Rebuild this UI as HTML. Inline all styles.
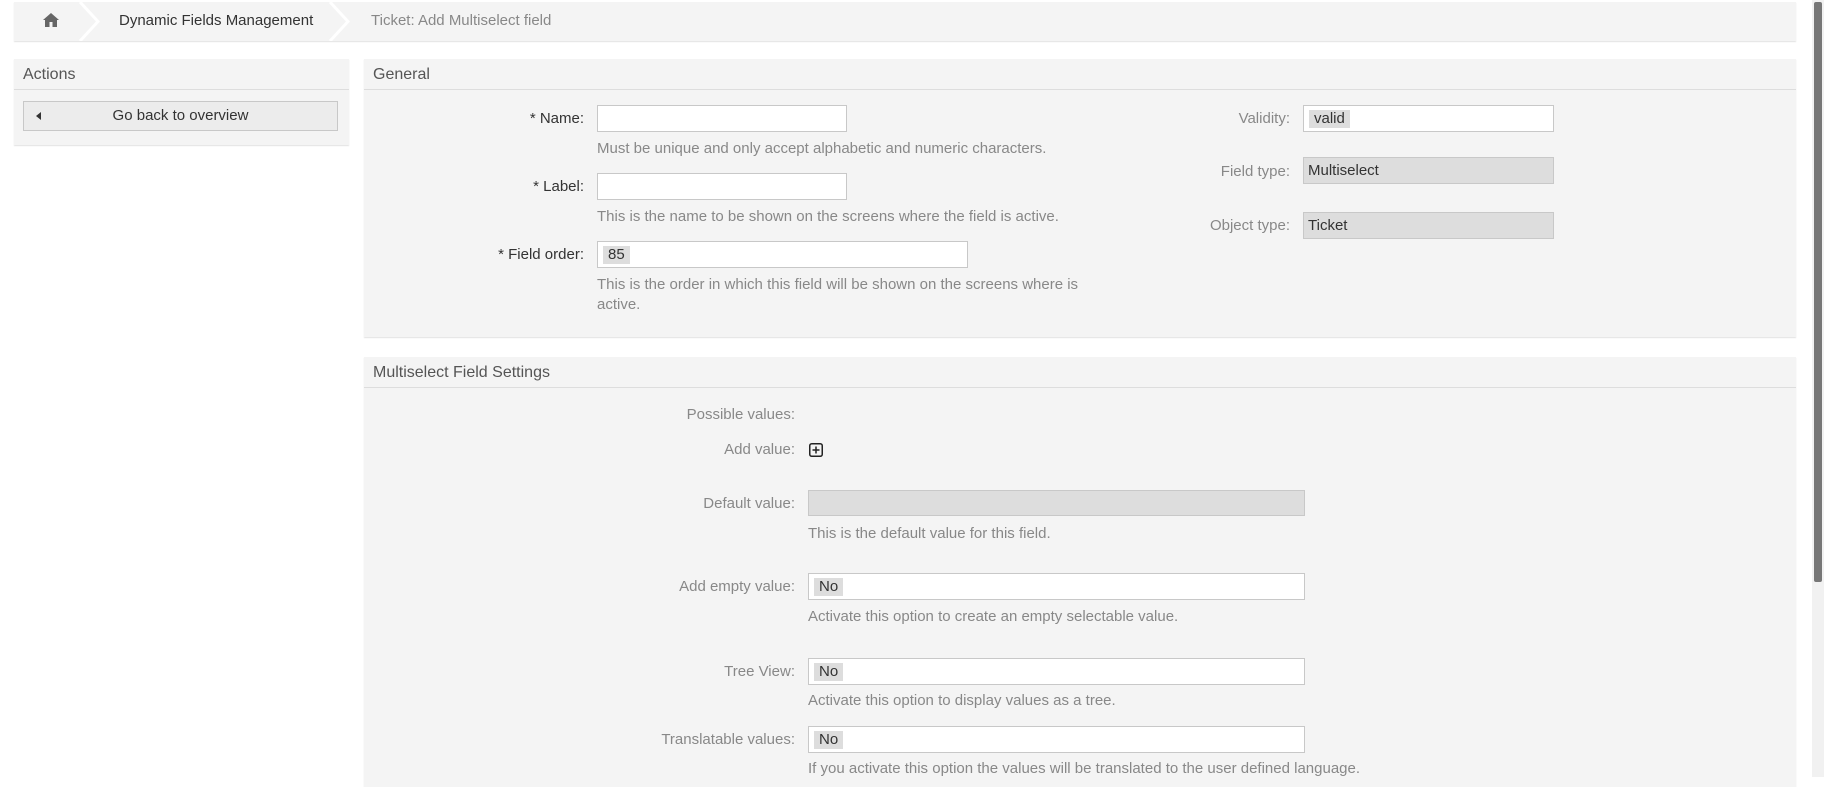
<!DOCTYPE html>
<html><head><style>
*{box-sizing:border-box;margin:0;padding:0}
body{width:1824px;height:777px;overflow:hidden;background:#fff;font-family:"Liberation Sans",Arial,sans-serif;font-size:15px;color:#777;position:relative}
.a{position:absolute}
.box{position:absolute;background:#f4f4f4;box-shadow:0 1px 1px #e2e2e2}
.hd{position:absolute;left:0;right:0;top:0;height:31px;border-bottom:1px solid #ddd;color:#555;font-size:16px;padding:7px 9px}
.lbl{position:absolute;text-align:right;color:#888}
.in{position:absolute;background:#fff;border:1px solid #c8c8c8;height:27px}
.dis{background:#ddd}
.tag{position:absolute;left:5px;top:4px;background:#ddd;color:#333;padding:1px 5px;height:18px;line-height:16px}
.help{position:absolute;color:#888;line-height:20px}
.st{color:#333}
</style></head><body>
<div class="box" style="left:14px;top:2px;width:1782px;height:39px"></div>
<svg class="a" style="left:42px;top:12px" width="18" height="16" viewBox="0 0 18 16"><path d="M9 1L1 8h2v7h4.5v-5h3v5H15V8h2z" fill="#666"/></svg>
<svg class="a" style="left:78px;top:2px" width="22" height="39"><path d="M2 0L20 19.5 2 39" fill="none" stroke="#fff" stroke-width="3"/></svg>
<div class="a st" style="left:119px;top:12px">Dynamic Fields Management</div>
<svg class="a" style="left:328px;top:2px" width="22" height="39"><path d="M2 0L20 19.5 2 39" fill="none" stroke="#fff" stroke-width="3"/></svg>
<div class="a" style="left:371px;top:12px;color:#888">Ticket: Add Multiselect field</div>

<div class="box" style="left:14px;top:59px;width:335px;height:86px"><div class="hd">Actions</div>
<div class="a" style="left:9px;top:42px;width:315px;height:30px;background:#ececec;border:1px solid #c8c8c8;text-align:center;line-height:28px;color:#333">Go back to overview</div>
<svg class="a" style="left:22px;top:53px" width="6" height="8"><path d="M5 0L0 4 5 8z" fill="#333"/></svg></div>

<div class="box" style="left:364px;top:59px;width:1432px;height:278px"><div class="hd">General</div></div>
<div class="lbl st" style="left:400px;width:184px;top:110px">* Name:</div>
<div class="in" style="left:597px;top:105px;width:250px"></div>
<div class="help" style="left:597px;top:139px">Must be unique and only accept alphabetic and numeric characters.</div>
<div class="lbl st" style="left:400px;width:184px;top:178px">* Label:</div>
<div class="in" style="left:597px;top:173px;width:250px"></div>
<div class="help" style="left:597px;top:207px">This is the name to be shown on the screens where the field is active.</div>
<div class="lbl st" style="left:400px;width:184px;top:246px">* Field order:</div>
<div class="in" style="left:597px;top:241px;width:371px"><span class="tag">85</span></div>
<div class="help" style="left:597px;top:275px;width:500px">This is the order in which this field will be shown on the screens where is<br>active.</div>
<div class="lbl" style="left:1100px;width:190px;top:110px">Validity:</div>
<div class="in" style="left:1303px;top:105px;width:251px"><span class="tag">valid</span></div>
<div class="lbl" style="left:1100px;width:190px;top:163px">Field type:</div>
<div class="in dis" style="left:1303px;top:157px;width:251px;color:#333;padding:4px 4px">Multiselect</div>
<div class="lbl" style="left:1100px;width:190px;top:217px">Object type:</div>
<div class="in dis" style="left:1303px;top:212px;width:251px;color:#333;padding:4px 4px">Ticket</div>

<div class="box" style="left:364px;top:357px;width:1432px;height:430px"><div class="hd">Multiselect Field Settings</div></div>
<div class="lbl" style="left:560px;width:235px;top:406px">Possible values:</div>
<div class="lbl" style="left:560px;width:235px;top:441px">Add value:</div>
<svg class="a" style="left:809px;top:443px" width="14" height="14"><rect x="0.75" y="0.75" width="12.5" height="12.5" rx="2" fill="none" stroke="#222" stroke-width="1.5"/><path d="M7 3.5v7M3.5 7h7" stroke="#222" stroke-width="1.5"/></svg>
<div class="lbl" style="left:560px;width:235px;top:495px">Default value:</div>
<div class="in dis" style="left:808px;top:490px;width:497px;height:26px"></div>
<div class="help" style="left:808px;top:524px">This is the default value for this field.</div>
<div class="lbl" style="left:560px;width:235px;top:578px">Add empty value:</div>
<div class="in" style="left:808px;top:573px;width:497px"><span class="tag">No</span></div>
<div class="help" style="left:808px;top:607px">Activate this option to create an empty selectable value.</div>
<div class="lbl" style="left:560px;width:235px;top:663px">Tree View:</div>
<div class="in" style="left:808px;top:658px;width:497px"><span class="tag">No</span></div>
<div class="help" style="left:808px;top:691px">Activate this option to display values as a tree.</div>
<div class="lbl" style="left:560px;width:235px;top:731px">Translatable values:</div>
<div class="in" style="left:808px;top:726px;width:497px"><span class="tag">No</span></div>
<div class="help" style="left:808px;top:759px">If you activate this option the values will be translated to the user defined language.</div>

<div class="a" style="left:1812px;top:0;width:12px;height:777px;background:#f1f1f1"></div>
<div class="a" style="left:1814px;top:2px;width:8px;height:580px;background:#777;border-radius:2px"></div>
</body></html>
